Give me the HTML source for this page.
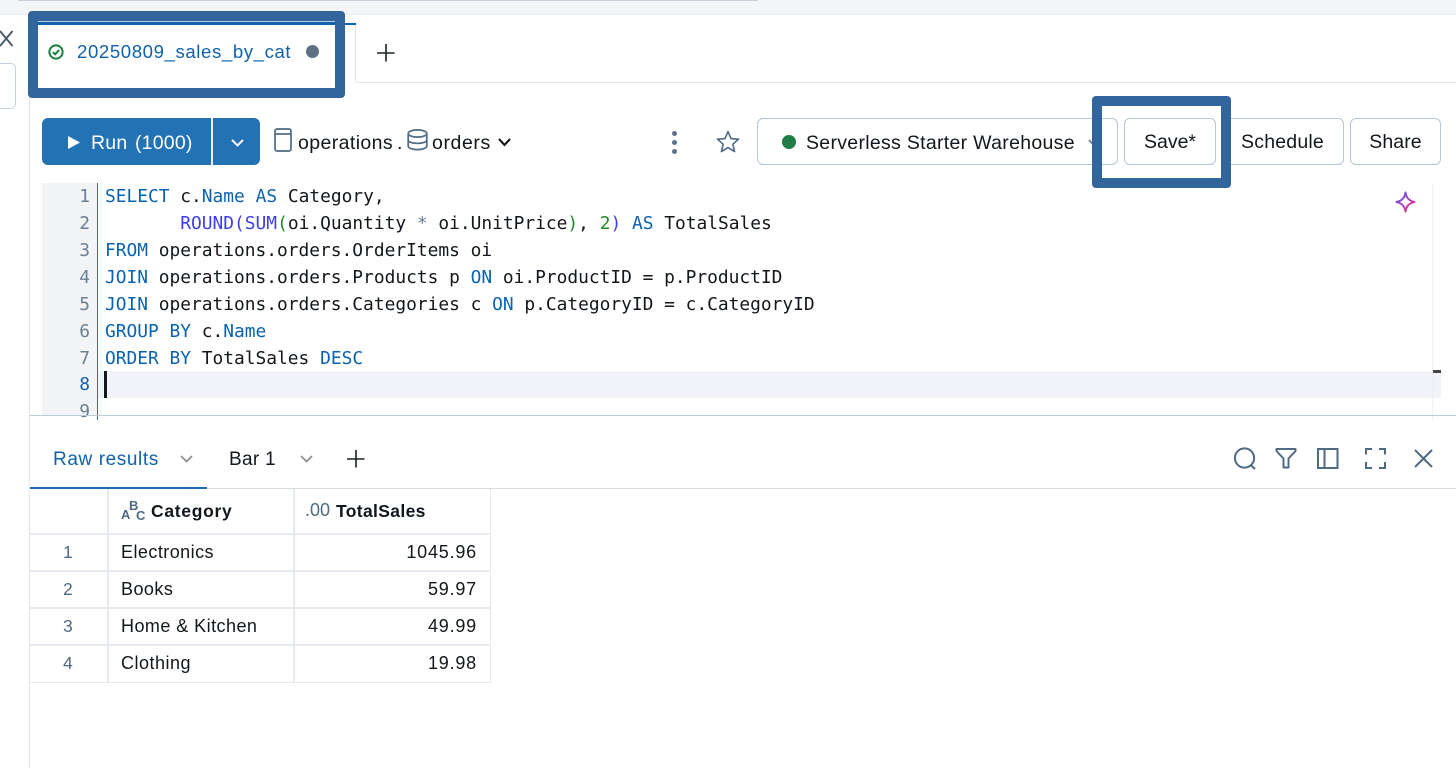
<!DOCTYPE html>
<html><head><meta charset="utf-8">
<style>
html,body{margin:0;padding:0;width:1456px;height:768px;overflow:hidden;background:#fff;font-family:"Liberation Sans",sans-serif;color:#11171c}
.a{position:absolute}
.t{position:absolute;white-space:pre;line-height:24px;font-size:19px}
.btn{position:absolute;box-sizing:border-box;border:1px solid #b4c6d8;border-radius:6px;background:#fff;height:47px;top:118px;text-align:center;line-height:47px;font-size:19.5px}
.code{position:absolute;left:105px;white-space:pre;font-family:"DejaVu Sans Mono",monospace;font-size:17.88px;line-height:27px;height:27px;color:#11171c}
.k{color:#0b62b0}.f{color:#3d3df0}.g{color:#1f8a2a}.o{color:#6b7f94}
.n{position:absolute;width:48px;left:42px;text-align:right;font-family:"DejaVu Sans Mono",monospace;font-size:17.9px;line-height:27px;color:#6b7f94}
.r{position:absolute;left:30px;width:460px;height:1px;background:#e6e9ef}
.v{position:absolute;top:489px;width:2px;height:194px;background:#e6e9ef}
svg{position:absolute;overflow:visible}
</style></head><body>
<!-- top browser strip -->
<div class="a" style="left:0;top:0;width:1456px;height:14px;background:#f3f5f7"></div>
<div class="a" style="left:18px;top:0;width:740px;height:1px;background:#c5d0da"></div>
<div class="a" style="left:0;top:14px;width:1456px;height:1px;background:#e9edf0"></div>
<!-- left pane -->
<div class="a" style="left:0;top:15px;width:29px;height:753px;background:#fff"></div>
<div class="a" style="left:29px;top:15px;width:1px;height:753px;background:#e3e8ee"></div>
<svg style="left:0;top:30px" width="14" height="18"><path d="M0 1L12.5 16M12.5 1L0 16" stroke="#4a5a68" stroke-width="1.9" fill="none"/></svg>
<div class="a" style="left:-10px;top:63px;width:26px;height:46px;box-sizing:border-box;border:1px solid #c5d2de;border-radius:5px"></div>
<!-- tabs -->
<div class="a" style="left:355px;top:23px;width:1px;height:59px;background:#dfe5eb"></div>
<div class="a" style="left:345px;top:23px;width:11px;height:2px;background:#0f62ab"></div>
<div class="a" style="left:356px;top:82px;width:1100px;height:1px;background:#e0e5ea"></div>
<div class="a" style="left:28px;top:11px;width:317px;height:87px;box-sizing:border-box;border:10px solid #31659c;border-radius:4px;background:#fff"></div>
<div class="a" style="left:38px;top:21px;width:297px;height:1px;background:#bcd0e2"></div>
<div class="a" style="left:38px;top:22px;width:297px;height:3px;background:#0f62ab"></div>
<svg style="left:48px;top:44px" width="16" height="16" viewBox="0 0 16 16"><circle cx="8" cy="8" r="6.6" stroke="#14803c" stroke-width="2" fill="none"/><path d="M4.9 8.2L7.1 10.3L11.1 6" stroke="#14803c" stroke-width="2" fill="none"/></svg>
<div class="t" style="left:77px;top:40px;font-size:18.6px;color:#0f62ab;letter-spacing:.6px">20250809_sales_by_cat</div>
<div class="a" style="left:306px;top:45px;width:13px;height:13px;border-radius:50%;background:#5f7285"></div>
<svg style="left:377px;top:44px" width="18" height="18"><path d="M9 0V17.5M0 9H17.5" stroke="#1a2026" stroke-width="1.6"/></svg>
<!-- run -->
<div class="a" style="left:42px;top:118px;width:218px;height:47px;border-radius:6px;background:#2272b4"></div>
<div class="a" style="left:211px;top:118px;width:2px;height:47px;background:#e8f0f7"></div>
<svg style="left:68px;top:136px" width="13" height="13"><path d="M0 0L12 6.5L0 13Z" fill="#fff"/></svg>
<div class="t" style="left:91px;top:131px;color:#fff;font-size:19.5px;word-spacing:2px;letter-spacing:.2px">Run (1000)</div>
<svg style="left:231px;top:139px" width="13" height="8"><path d="M1 1L6.5 6.5L12 1" stroke="#fff" stroke-width="2" fill="none"/></svg>
<!-- catalog -->
<svg style="left:274px;top:128px" width="19" height="25" viewBox="0 0 19 25"><rect x="1" y="1" width="16" height="22" rx="2" stroke="#4f6a83" stroke-width="1.7" fill="none"/><path d="M1 6H17" stroke="#4f6a83" stroke-width="1.7"/></svg>
<div class="t" style="left:298px;top:131px;font-size:19.5px;letter-spacing:.4px">operations</div>
<div class="t" style="left:397px;top:131px;font-size:19.5px">.</div>
<svg style="left:407px;top:129px" width="21" height="22" viewBox="0 0 21 22"><ellipse cx="10.5" cy="4.5" rx="9.3" ry="3.6" stroke="#4f6a83" stroke-width="1.7" fill="none"/><path d="M1.2 4.5V17C1.2 19 5.5 20.6 10.5 20.6S19.8 19 19.8 17V4.5M1.2 11C1.2 13 5.5 14.4 10.5 14.4S19.8 13 19.8 11" stroke="#4f6a83" stroke-width="1.7" fill="none"/></svg>
<div class="t" style="left:432px;top:131px;font-size:19.5px;letter-spacing:.6px">orders</div>
<svg style="left:498px;top:138px" width="13" height="9"><path d="M1 1L6.5 7L12 1" stroke="#11171c" stroke-width="2.1" fill="none"/></svg>
<!-- kebab, star -->
<div class="a" style="left:672px;top:131px;width:5px;height:5px;border-radius:50%;background:#5f7285"></div>
<div class="a" style="left:672px;top:140px;width:5px;height:5px;border-radius:50%;background:#5f7285"></div>
<div class="a" style="left:672px;top:149px;width:5px;height:5px;border-radius:50%;background:#5f7285"></div>
<svg style="left:716px;top:130px" width="24" height="23" viewBox="0 0 24 23"><path d="M12 1.5L15 8.6L22.5 9.2L16.8 14.2L18.6 21.6L12 17.6L5.4 21.6L7.2 14.2L1.5 9.2L9 8.6Z" stroke="#4f6a83" stroke-width="1.6" fill="none" stroke-linejoin="round"/></svg>
<!-- warehouse -->
<div class="btn" style="left:757px;width:361px"></div>
<div class="a" style="left:782px;top:135px;width:14px;height:14px;border-radius:50%;background:#1f7d45"></div>
<div class="t" style="left:806px;top:131px;font-size:19.5px;letter-spacing:.3px">Serverless Starter Warehouse</div>
<svg style="left:1088px;top:139px" width="12" height="8"><path d="M1 1L6 6.5L11 1" stroke="#5f7285" stroke-width="1.6" fill="none"/></svg>
<div class="btn" style="left:1210px;width:134px;padding-left:11px;letter-spacing:.2px">Schedule</div>
<div class="btn" style="left:1350px;width:91px;letter-spacing:.1px">Share</div>
<div class="a" style="left:1092px;top:96px;width:139px;height:92px;box-sizing:border-box;border:10px solid #31659c;border-radius:4px"></div>
<div class="a" style="left:1118px;top:106px;width:103px;height:72px;background:#fff"></div>
<div class="btn" style="left:1124px;width:92px">Save*</div>
<svg style="left:1395px;top:191px" width="21" height="22" viewBox="0 0 21 22"><defs><linearGradient id="s" x1="0" y1="0" x2="1" y2="1"><stop offset="0" stop-color="#3d5bf0"/><stop offset=".6" stop-color="#c23bb8"/><stop offset="1" stop-color="#f0365a"/></linearGradient></defs><path d="M10.5 1.5C11.3 7 14 9.8 19.5 11C14 12.2 11.3 15 10.5 20.5C9.7 15 7 12.2 1.5 11C7 9.8 9.7 7 10.5 1.5Z" stroke="url(#s)" stroke-width="2" fill="none" stroke-linejoin="round"/></svg>
<!-- editor -->
<div class="a" style="left:42px;top:183px;width:55px;height:233px;background:#f2f4f8"></div>
<div class="a" style="left:97px;top:183px;width:1px;height:237px;background:#2f6ea5"></div>
<div class="a" style="left:98px;top:371px;width:1343px;height:27px;background:#f1f3f8"></div>
<div class="a" style="left:104px;top:371px;width:3px;height:27px;background:#11171c"></div>
<div class="a" style="left:1432px;top:183px;width:1px;height:237px;background:#eceff3"></div>
<div class="a" style="left:1433px;top:370px;width:8px;height:3px;background:#444"></div>
<div class="n" style="top:183px">1</div><div class="n" style="top:210px">2</div><div class="n" style="top:237px">3</div><div class="n" style="top:264px">4</div><div class="n" style="top:291px">5</div><div class="n" style="top:318px">6</div><div class="n" style="top:345px">7</div><div class="n" style="top:371px;color:#0f62ab">8</div><div class="n" style="top:398px;height:20px;overflow:hidden">9</div>
<div class="code" style="top:183px"><span class="k">SELECT</span> c.<span class="k">Name</span> <span class="k">AS</span> Category,</div>
<div class="code" style="top:210px">       <span class="f">ROUND(SUM</span><span class="g">(</span>oi.Quantity <span class="o">*</span> oi.UnitPrice<span class="g">)</span>, <span class="g">2</span><span class="f">)</span> <span class="k">AS</span> TotalSales</div>
<div class="code" style="top:237px"><span class="k">FROM</span> operations.orders.OrderItems oi</div>
<div class="code" style="top:264px"><span class="k">JOIN</span> operations.orders.Products p <span class="k">ON</span> oi.ProductID = p.ProductID</div>
<div class="code" style="top:291px"><span class="k">JOIN</span> operations.orders.Categories c <span class="k">ON</span> p.CategoryID = c.CategoryID</div>
<div class="code" style="top:318px"><span class="k">GROUP BY</span> c.<span class="k">Name</span></div>
<div class="code" style="top:345px"><span class="k">ORDER BY</span> TotalSales <span class="k">DESC</span></div>
<!-- results -->
<div class="a" style="left:30px;top:415px;width:1426px;height:1px;background:#bccbd8"></div>
<div class="t" style="left:53px;top:448px;font-size:19px;color:#0f62ab;letter-spacing:.6px">Raw results</div>
<svg style="left:180px;top:455px" width="13" height="8"><path d="M1 1L6.5 6.5L12 1" stroke="#8a8f96" stroke-width="1.7" fill="none"/></svg>
<div class="t" style="left:229px;top:448px;font-size:19px;letter-spacing:.3px">Bar 1</div>
<svg style="left:300px;top:455px" width="13" height="8"><path d="M1 1L6.5 6.5L12 1" stroke="#8a8f96" stroke-width="1.7" fill="none"/></svg>
<svg style="left:347px;top:450px" width="18" height="18"><path d="M9 0V17.5M0 9H17.5" stroke="#1a2026" stroke-width="1.6"/></svg>
<svg style="left:1233px;top:447px" width="24" height="24" viewBox="0 0 24 24"><circle cx="11.5" cy="11" r="9.6" stroke="#4f6a83" stroke-width="2" fill="none"/><path d="M17.8 18L22 22" stroke="#4f6a83" stroke-width="2"/></svg>
<svg style="left:1275px;top:447px" width="22" height="22" viewBox="0 0 22 22"><path d="M1.5 2H20.5V4L13.5 11.5V20.5H8.5V11.5L1.5 4Z" stroke="#4f6a83" stroke-width="2" fill="none" stroke-linejoin="round"/></svg>
<svg style="left:1317px;top:448px" width="22" height="21" viewBox="0 0 22 21"><rect x="1" y="1" width="19.5" height="19" stroke="#4f6a83" stroke-width="2" fill="none"/><path d="M7.5 1V20" stroke="#4f6a83" stroke-width="2"/></svg>
<svg style="left:1365px;top:448px" width="21" height="21" viewBox="0 0 21 21"><path d="M1 6.5V1H7M14 1H20V6.5M20 14V20H14M7 20H1V14" stroke="#4f6a83" stroke-width="2" fill="none"/></svg>
<svg style="left:1414px;top:449px" width="19" height="19" viewBox="0 0 19 19"><path d="M1 1L18 18M18 1L1 18" stroke="#4f6a83" stroke-width="2" fill="none"/></svg>
<div class="a" style="left:207px;top:488px;width:1249px;height:1px;background:#d5dce4"></div>
<div class="a" style="left:30px;top:487px;width:177px;height:2px;background:#1a6cb3"></div>
<!-- table -->
<div class="v" style="left:107px"></div><div class="v" style="left:293px"></div><div class="v" style="left:490px;width:1px"></div>
<div class="r" style="top:533px;height:2px"></div><div class="r" style="top:570px;height:2px"></div><div class="r" style="top:607px;height:2px"></div><div class="r" style="top:644px;height:2px"></div><div class="r" style="top:682px;height:1px;width:461px"></div>
<div class="t" style="left:121px;top:503px;font-size:13px;color:#4f6a83;font-weight:bold">A</div>
<div class="t" style="left:129px;top:494px;font-size:13px;color:#4f6a83;font-weight:bold">B</div>
<div class="t" style="left:136px;top:504px;font-size:13px;color:#4f6a83;font-weight:bold">C</div>
<div class="t" style="left:151px;top:499px;font-size:17.5px;font-weight:bold;letter-spacing:.7px">Category</div>
<div class="t" style="left:305px;top:498px;font-size:18px;color:#4f6a83">.00</div>
<div class="t" style="left:336px;top:499px;font-size:17.5px;font-weight:bold;letter-spacing:.35px">TotalSales</div>
<div class="t" style="left:63px;top:540px;font-size:17.5px;color:#4f6a83">1</div>
<div class="t" style="left:63px;top:577px;font-size:17.5px;color:#4f6a83">2</div>
<div class="t" style="left:63px;top:614px;font-size:17.5px;color:#4f6a83">3</div>
<div class="t" style="left:63px;top:651px;font-size:17.5px;color:#4f6a83">4</div>
<div class="t" style="left:121px;top:540px;font-size:18px;letter-spacing:.45px">Electronics</div>
<div class="t" style="left:121px;top:577px;font-size:18px;letter-spacing:.45px">Books</div>
<div class="t" style="left:121px;top:614px;font-size:18px;letter-spacing:.45px">Home &amp; Kitchen</div>
<div class="t" style="left:121px;top:651px;font-size:18px;letter-spacing:.5px">Clothing</div>
<div class="t" style="right:979px;top:540px;font-size:18px;letter-spacing:.8px">1045.96</div>
<div class="t" style="right:979px;top:577px;font-size:18px;letter-spacing:.8px">59.97</div>
<div class="t" style="right:979px;top:614px;font-size:18px;letter-spacing:.8px">49.99</div>
<div class="t" style="right:979px;top:651px;font-size:18px;letter-spacing:.8px">19.98</div>
</body></html>
